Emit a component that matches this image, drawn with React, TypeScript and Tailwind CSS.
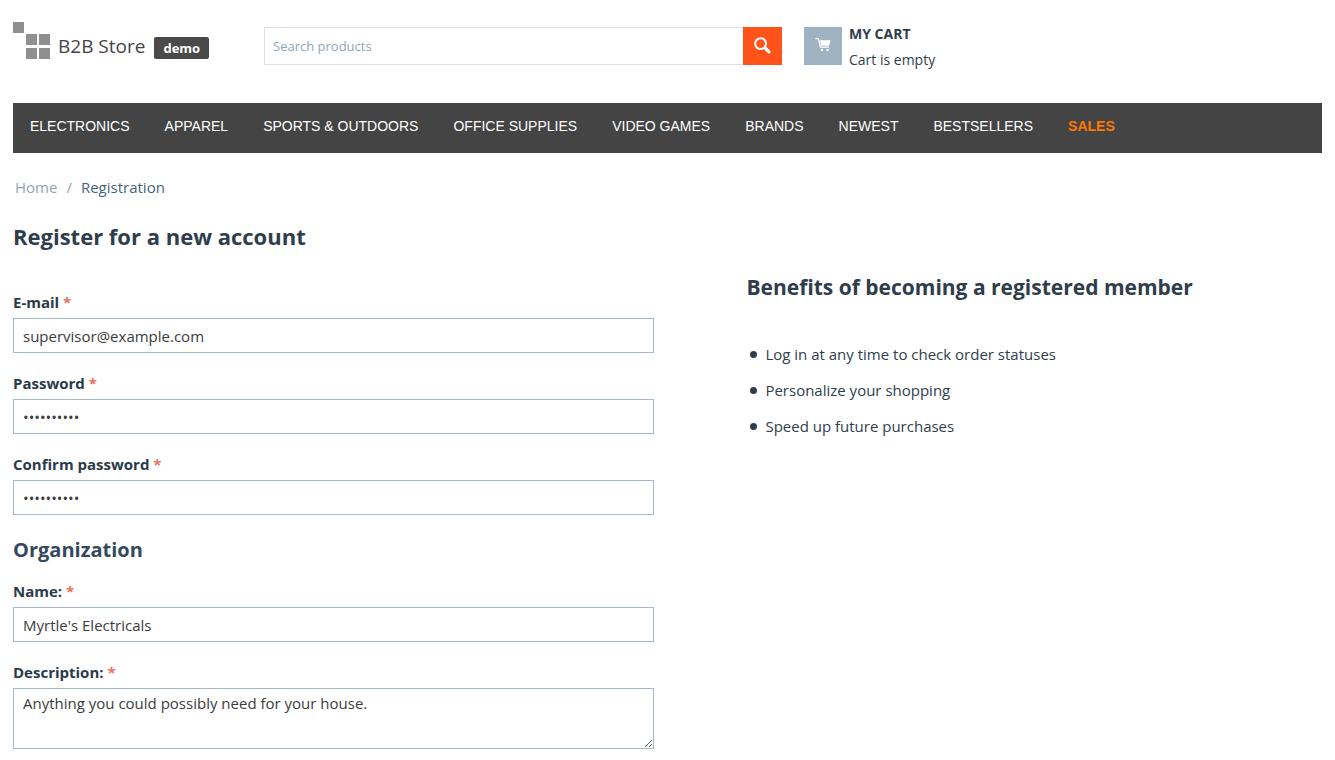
import React from "react";

const categories = [
  "Electronics",
  "Apparel",
  "Sports & Outdoors",
  "Office Supplies",
  "Video Games",
  "Brands",
  "Newest",
  "Bestsellers",
];

const benefits = [
  "Log in at any time to check order statuses",
  "Personalize your shopping",
  "Speed up future purchases",
];

const inputClass =
  "block h-[35px] w-full border border-[#a7b9ca] bg-white px-[9px] text-[15px] text-[#3c3c3c] outline-none";

function Label({ htmlFor, text }: { htmlFor: string; text: string }) {
  return (
    <label htmlFor={htmlFor} className="mb-[6px] block text-[15px] leading-5 font-bold text-[#2b3a49]">
      {text} <span className="text-[#ea7162]">*</span>
    </label>
  );
}

function Field({ id, label, value, type = "text" }: { id: string; label: string; value: string; type?: string }) {
  return (
    <div className="mb-5">
      <Label htmlFor={id} text={label} />
      <input id={id} type={type} defaultValue={value} className={inputClass} />
    </div>
  );
}

function Logo() {
  return (
    <a href="#" className="flex w-[251px] shrink-0 items-start">
      <svg width="38" height="38" viewBox="0 0 38 38" fill="#8f8f8f" aria-hidden="true">
        <rect x="0" y="0" width="11" height="11" />
        <rect x="13" y="12" width="11" height="11" />
        <rect x="26" y="12" width="11" height="11" />
        <rect x="13" y="26" width="11" height="11" />
        <rect x="26" y="26" width="11" height="11" />
      </svg>
      <span className="ml-[7px] pt-3 text-[19px] leading-6 text-[#444444]">B2B Store</span>
      <span className="mt-[15px] ml-[9px] rounded-[2px] bg-[#4a4a4a] px-[9px] text-[13px] leading-[22px] font-bold text-white">
        demo
      </span>
    </a>
  );
}

export default function App() {
  return (
    <div className="px-[13px] pb-[11px] font-['Open_Sans','Noto_Sans',sans-serif] text-[#2f3d4d]">
      <header className="flex items-start pt-[22px]">
        <Logo />
        <form className="mt-[5px] flex w-[518px]">
          <input
            type="search"
            aria-label="Search products"
            placeholder="Search products"
            className="h-[38px] min-w-0 flex-1 border border-r-0 border-[#dbe2e9] px-2 text-[13px] outline-none placeholder:text-[#93a6b8]"
          />
          <button type="submit" aria-label="Search" className="flex h-[38px] w-[39px] items-center justify-center bg-[#ff5319]">
            <svg width="18" height="18" viewBox="0 0 18 18" fill="none" stroke="white" aria-hidden="true">
              <circle cx="6.6" cy="6.6" r="5.4" strokeWidth="2" />
              <path d="M11.2 11l3.8 3.8" strokeWidth="3.2" strokeLinecap="round" />
            </svg>
          </button>
        </form>
        <a href="#" className="mt-[5px] ml-[22px] flex">
          <span className="flex size-[38px] items-center justify-center bg-[#9fb2c1]">
            <svg width="16" height="16" viewBox="0 0 16 16" fill="white" aria-hidden="true">
              <path d="M0.4 0h3.4l2.1 8.6h8.3v1.2H4.9L2.9 1.3H.4z" />
              <path d="M4.9 2.3H15.6L14 7.8H6.2z" />
              <circle cx="7" cy="12" r="1.3" />
              <circle cx="12.6" cy="12" r="1.3" />
            </svg>
          </span>
          <span className="-mt-[6px] ml-[7px] flex flex-col text-[14px] leading-[26px]">
            <strong>MY CART</strong>
            <span>Cart is empty</span>
          </span>
        </a>
      </header>

      <nav className="mt-[30px] flex h-[50px] gap-[35px] bg-[#444444] px-[17px] font-['Liberation_Sans',Arial,sans-serif] text-[14px] leading-[46px] text-white uppercase">
        {categories.map((name) => (
          <a key={name} href="#">
            {name}
          </a>
        ))}
        <a href="#" className="font-bold text-[#ff7700]">
          Sales
        </a>
      </nav>

      <div className="mt-[23px] flex gap-[9px] pl-[2px] text-[15px] leading-[22px] text-[#8fa6bc]">
        <a href="#">Home</a>
        <span>/</span>
        <span className="text-[#46627c]">Registration</span>
      </div>

      <h1 className="mt-[22px] text-[22px] leading-8 font-bold">Register for a new account</h1>

      <main className="flex">
        <form className="w-[49%] pt-10">
          <Field id="email" label="E-mail" value="supervisor@example.com" />
          <Field id="password" label="Password" type="password" value="supervisor" />
          <Field id="confirm" label="Confirm password" type="password" value="supervisor" />
          <h2 className="mb-4 text-[20px] leading-[30px] font-bold text-[#34495e]">Organization</h2>
          <Field id="name" label="Name:" value="Myrtle's Electricals" />
          <Label htmlFor="description" text="Description:" />
          <textarea
            id="description"
            defaultValue="Anything you could possibly need for your house."
            className="block h-[61px] w-full border border-[#a7b9ca] bg-white px-[9px] py-1 text-[15px] leading-5 text-[#3c3c3c] outline-none"
          />
        </form>
        <section className="ml-[92px] pt-5">
          <h2 className="text-[21px] leading-[30px] font-bold">Benefits of becoming a registered member</h2>
          <ul className="mt-[34px] pl-1 text-[15px] leading-9">
            {benefits.map((benefit) => (
              <li key={benefit} className="flex items-center gap-2">
                <span className="size-[7px] rounded-full bg-[#2f3d4d]" />
                {benefit}
              </li>
            ))}
          </ul>
        </section>
      </main>
    </div>
  );
}
